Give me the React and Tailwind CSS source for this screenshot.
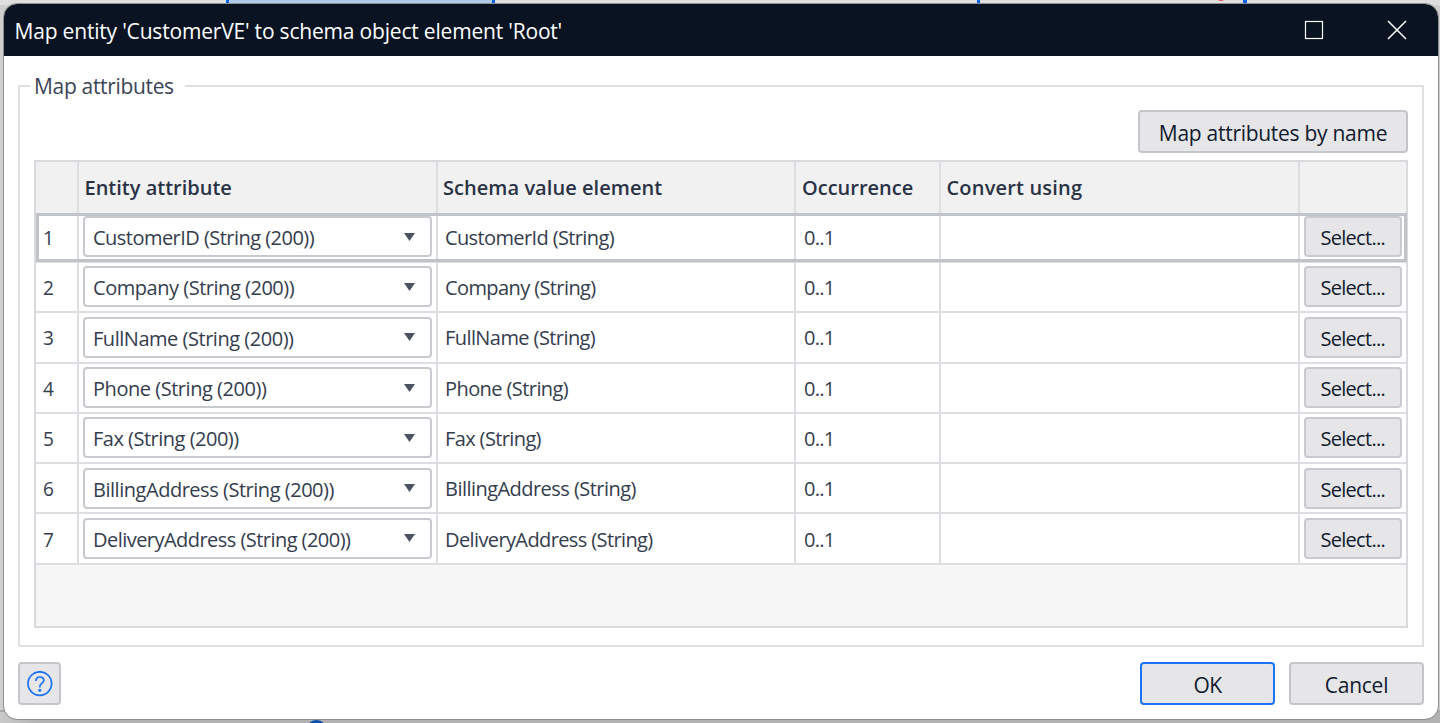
import React from "react";

const rows = [
  { id: 1, entity: "CustomerID (String (200))", value: "CustomerId (String)", et: "tracking-[-0.53px]", vt: "tracking-[-0.62px]" },
  { id: 2, entity: "Company (String (200))", value: "Company (String)", et: "tracking-[-0.47px]", vt: "tracking-[-0.6px]" },
  { id: 3, entity: "FullName (String (200))", value: "FullName (String)", et: "tracking-[-0.47px]", vt: "tracking-[-0.58px]" },
  { id: 4, entity: "Phone (String (200))", value: "Phone (String)", et: "tracking-[-0.46px]", vt: "tracking-[-0.58px]" },
  { id: 5, entity: "Fax (String (200))", value: "Fax (String)", et: "tracking-[-0.5px]", vt: "tracking-[-0.62px]" },
  { id: 6, entity: "BillingAddress (String (200))", value: "BillingAddress (String)", et: "tracking-[-0.47px]", vt: "tracking-[-0.54px]" },
  { id: 7, entity: "DeliveryAddress (String (200))", value: "DeliveryAddress (String)", et: "tracking-[-0.54px]", vt: "tracking-[-0.61px]" },
];

const columns = "grid grid-cols-[43px_359px_358px_145px_359px_106px]";
const cell = "border-r-2 border-[#dcdee1]";

function TitleBar() {
  return (
    <header className="flex h-[52px] shrink-0 items-center bg-[#091322] pr-[31px] pl-[10.5px] text-white">
      <h1 className="pt-px text-[21px] leading-7 tracking-[-0.19px]">Map entity 'CustomerVE' to schema object element 'Root'</h1>
      <svg className="ml-auto" width="20" height="20" viewBox="0 0 20 20" fill="none" stroke="#fff" strokeWidth="1.2">
        <rect x="1.5" y="1.5" width="17" height="17" />
      </svg>
      <svg className="ml-[63px]" width="20" height="20" viewBox="0 0 20 20" fill="none" stroke="#fff" strokeWidth="1.5">
        <path d="M1 1L19 19M19 1L1 19" />
      </svg>
    </header>
  );
}

function Button({ className, children }) {
  return (
    <button className={`flex items-center justify-center rounded-[4px] border-2 bg-[#e6e6e8] text-[#101a2d] ${className}`}>
      {children}
    </button>
  );
}

function Row({ row, selected }) {
  return (
    <div className={`relative h-[50.3px] border-b-2 border-[#dcdee1] bg-white text-[20px] text-[#343d4e] ${columns}`}>
      <div className={`${cell} flex items-center pt-0.5 pl-[7px]`}>
        <span className="origin-left scale-x-95">{row.id}</span>
      </div>
      <div className={`${cell} pt-[3.5px] pl-1`}>
        <div className="flex h-[41px] w-[349px] items-center justify-between rounded-[4px] border-2 border-[#c8cacf] pr-[15.5px] pl-2">
          <span className={`pt-[3px] ${row.et}`}>{row.entity}</span>
          <svg width="11" height="8" viewBox="0 0 11 8" fill="#4b5363">
            <path d="M0 0H11L5.5 8Z" />
          </svg>
        </div>
      </div>
      <div className={`${cell} flex items-center pt-0.5 pl-[7px]`}>
        <span className={row.vt}>{row.value}</span>
      </div>
      <div className={`${cell} flex items-center pt-0.5 pl-2 tracking-[-0.7px]`}>0..1</div>
      <div className={cell} />
      <div className="pt-[3.5px] pl-[3.5px]">
        <Button className="h-[41px] w-[98.5px] border-[#c8cacf] pt-[3px] text-[20px] tracking-[-0.7px]">Select...</Button>
      </div>
      {selected && <div className="pointer-events-none absolute top-0 -right-px bottom-[-1px] left-0 border-[3px] border-[#c0c3c8]" />}
    </div>
  );
}

export default function App() {
  return (
    <div className="relative h-[723px] w-[1440px] overflow-hidden bg-[#cfcfcf] pt-[4px] pl-1 font-['Open_Sans','Noto_Sans',sans-serif]">
      <div className="absolute top-0 left-0 flex h-[5px] w-full bg-[#dedede]">
        <div className="ml-[226px] w-[269px] border-x-[3px] border-[#0b62e6] bg-[#aecbe8]" />
        <div className="ml-[482px] w-[3px] bg-[#0b62e6]" />
        <div className="ml-[263px] w-1 bg-[#0b62e6]" />
      </div>
      <div className="absolute -top-[9px] left-[1216px] size-2.5 rounded-full bg-[#e8505b]" />
      <div className="absolute bottom-0 left-0 h-[13px] w-full border-t-2 border-[#a9a9ad] bg-linear-to-r from-[#cacaca] to-[#b2b2b2] to-[40px]" />
      <div className="absolute bottom-[-18px] left-[306px] size-[21px] rounded-full bg-[#0a4fb4]" />

      <main className="relative flex h-[715px] w-[1434px] flex-col overflow-hidden rounded-[13px] bg-white outline-[1.5px] outline-[#8e8e8e]">
        <TitleBar />
        <section className="relative mt-[29px] ml-[14px] flex h-[562px] w-[1406px] shrink-0 flex-col border-2 border-[#dfe0e2] pl-[14px]">
          <h2 className="absolute -top-4 left-[10px] w-[155px] bg-white pl-1 text-[21px] leading-[30px] tracking-[-0.33px] text-[#3b4456]">Map attributes</h2>
          <Button className="mt-[23px] ml-[1104px] h-[43px] w-[270px] shrink-0 border-[#c3c6cb] pt-1 text-[21px] tracking-[-0.28px]">Map attributes by name</Button>
          <div className="mt-[7px] flex h-[468px] w-[1374px] flex-col border-2 border-[#d8dadd] bg-[#f6f6f6]">
            <div className={`h-[50.7px] shrink-0 bg-[#f1f1f1] text-[20px] font-semibold text-[#2a3346] ${columns}`}>
              <div className={cell} />
              <div className={`${cell} flex items-center pt-px pl-[5.5px]`}>Entity attribute</div>
              <div className={`${cell} flex items-center pt-px pl-[5px] tracking-[0.05px]`}>Schema value element</div>
              <div className={`${cell} flex items-center pt-px pl-1.5`}>Occurrence</div>
              <div className={`${cell} flex items-center pt-px pl-[5.5px] tracking-[0.18px]`}>Convert using</div>
            </div>
            {rows.map((row) => (
              <Row key={row.id} row={row} selected={row.id === 1} />
            ))}
          </div>
        </section>
        <footer className="mt-[15px] flex shrink-0 pl-[14px]">
          <Button className="size-[43px] border-[#c3c6cb]">
            <svg width="26" height="26" viewBox="0 0 26 26" fill="none" stroke="#176ff5" strokeWidth="1.7">
              <circle cx="12.8" cy="12.6" r="11.8" />
              <path d="M8.8 10C8.8 7.4 10.4 6 12.8 6S16.8 7.4 16.8 9.6C16.8 12.4 12.8 12.4 12.8 15.4V16.4" />
              <circle cx="12.8" cy="19.2" r="1.5" fill="#176ff5" stroke="none" />
            </svg>
          </Button>
          <Button className="ml-[1079px] h-[43px] w-[135px] border-[#1a73f8] pt-1 text-[21px] tracking-[-0.7px]">OK</Button>
          <Button className="ml-[14px] h-[43px] w-[135px] border-[#c3c6cb] pt-1 text-[21px] tracking-[-0.25px]">Cancel</Button>
        </footer>
      </main>
    </div>
  );
}
